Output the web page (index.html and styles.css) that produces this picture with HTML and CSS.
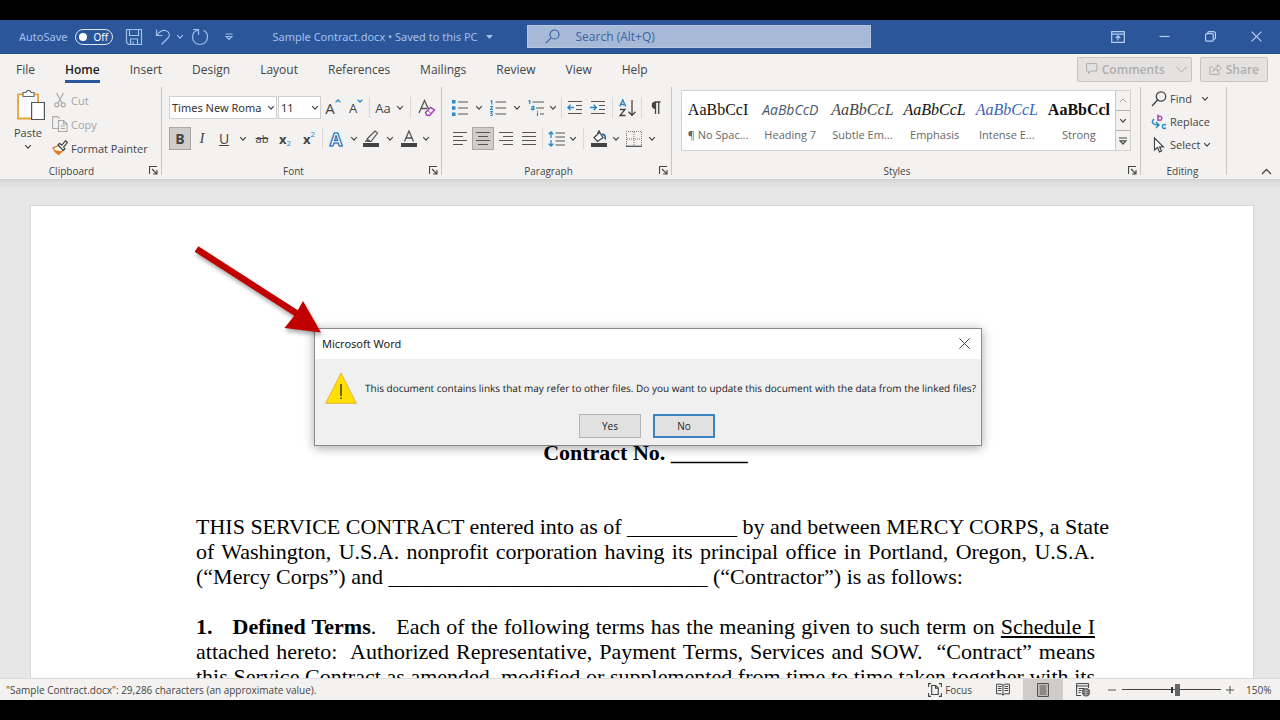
FILE: index.html
```html
<!DOCTYPE html>
<html lang="en">
<head>
<meta charset="utf-8">
<title>Sample Contract.docx</title>
<link rel="stylesheet" href="styles.css">
</head>
<body>
<svg class="defs" aria-hidden="true">
  <symbol id="chev" viewBox="0 0 8 6"><path d="M1.2 1.2 4 4.2 6.8 1.2" fill="none" stroke="currentColor" stroke-width="1.2"/></symbol>
  <symbol id="launch" viewBox="0 0 9 9"><path d="M.5 8V.5H8M3 3l4.500 4.500M8 4v4H4" fill="none" stroke="#444" stroke-width="1.100"/></symbol>
</svg>
<div class="app">
  <header class="titlebar">
    <label class="autosave">AutoSave
      <span class="toggle"><input type="checkbox" class="toggle-input"><span class="toggle-text">Off</span></span>
    </label>
    <div class="quick">
      <button class="tb" aria-label="Save"><svg width="18" height="18" viewBox="0 0 18 18"><path d="M1.500 1.500h15v15h-13l-2-2zM4.500 1.500v6h9v-6M5.500 16.500v-5.500h7v5.500M8 16v-2.500"/></svg></button>
      <button class="tb tb-undo" aria-label="Undo"><svg width="18" height="18" viewBox="0 0 18 18"><path d="M2.500 1.500v6h6M3 7C6 3 9 2 11.500 2.500c4 .8 5 5 2.500 7.500l-6.500 6.500"/></svg></button>
      <button class="tb tb-small" aria-label="Undo list"><svg width="8" height="6"><use href="#chev"/></svg></button>
      <button class="tb" aria-label="Repeat"><svg width="18" height="18" viewBox="0 0 18 18"><path d="M2 1.500h5.500v5.500M7 2C3.500 3 1.500 5.500 1.500 9a7.500 7.500 0 0 0 15 0c0-3-1.500-5.500-4-6.700"/></svg></button>
      <button class="tb" aria-label="Customize toolbar"><svg width="8" height="8" viewBox="0 0 8 8"><path d="M.5 1h7M1 3.500h6L4 6.500z"/></svg></button>
    </div>
    <button class="doc-name">Sample Contract.docx • Saved to this PC <svg width="7" height="4" viewBox="0 0 7 4"><path d="M0 0h7L3.500 4z" fill="currentColor"/></svg></button>
    <label class="search">
      <svg width="15" height="15" viewBox="0 0 15 15"><circle cx="9.500" cy="5.500" r="4.500"/><path d="M6.300 8.700.8 14.200"/></svg>
      <input class="search-input" type="text" placeholder="Search (Alt+Q)" aria-label="Search">
    </label>
    <div class="window-buttons">
      <button class="wb" aria-label="Ribbon options"><svg width="14" height="12" viewBox="0 0 14 12"><path d="M.7.7h12.600v10.600H.7zM.7 3.200h12.600M7 9.500V5M4.700 7 7 4.800 9.300 7"/></svg></button>
      <button class="wb" aria-label="Minimize"><svg width="11" height="11" viewBox="0 0 11 11"><path d="M.5 5.500h10"/></svg></button>
      <button class="wb" aria-label="Restore"><svg width="11" height="11" viewBox="0 0 11 11"><rect x=".6" y="2.600" width="7.600" height="7.600" rx="1"/><path d="M2.800 2.400V1.800Q2.800.6 4 .6h4.500q1.900 0 1.900 1.900V7q0 1.200-1.200 1.200h-.8"/></svg></button>
      <button class="wb" aria-label="Close window"><svg width="11" height="11" viewBox="0 0 11 11"><path d="m.6.6 9.800 9.800M10.400.6.6 10.400"/></svg></button>
    </div>
  </header>

  <nav class="tabs">
    <button class="tab">File</button>
    <button class="tab tab-active">Home</button>
    <button class="tab">Insert</button>
    <button class="tab">Design</button>
    <button class="tab">Layout</button>
    <button class="tab">References</button>
    <button class="tab">Mailings</button>
    <button class="tab">Review</button>
    <button class="tab">View</button>
    <button class="tab">Help</button>
    <div class="tab-actions">
      <button class="action comments" disabled><svg width="12" height="12" viewBox="0 0 12 12"><path d="M.6.6h10.300v7.400H5L2.500 10.500V8H.6z"/></svg>Comments<svg class="action-chev" width="11" height="7" viewBox="0 0 11 7"><path d="m.6 1 4.900 5 4.900-5"/></svg></button>
      <button class="action" disabled><svg width="13" height="12" viewBox="0 0 13 12"><path d="M4 4H1v7.400h9V8.500M4 8.500c.3-3 2-4.500 4.500-4.500V1.500l4 3.700-4 3.500V6.300C6.500 6.200 5 7 4 8.500z"/></svg>Share</button>
    </div>
  </nav>

  <section class="ribbon">
    <div class="group clipboard">
      <div class="clip-body">
        <button class="paste">
          <svg width="29" height="31" viewBox="0 0 29 31"><path d="M7 4.500H2v24h13M18 4.500h4V12" fill="#fff" stroke="#e8a33d" stroke-width="1.800"/><path d="M3 5.500h18V12h-6v15H3z" fill="#fafafa"/><path d="M7 6.500v-4h3C10.300-.2 14.700-.2 15 2.500h3v4z" fill="#fff" stroke="#666" stroke-width="1.100"/><path d="M15.600 12.500h12.800v17H15.600z" fill="#fff" stroke="#555" stroke-width="1.200"/></svg>
          <span>Paste</span>
          <svg width="8" height="6"><use href="#chev"/></svg>
        </button>
        <div class="clip-list">
          <button class="cmd" disabled><svg width="16" height="16" viewBox="0 0 16 16"><g fill="none" stroke="#aaa" stroke-width="1.200"><path d="M4.500 1 10 11M11.500 1 6 11"/><circle cx="4.800" cy="12.800" r="2"/><circle cx="11.200" cy="12.800" r="2"/></g></svg>Cut</button>
          <button class="cmd" disabled><svg width="16" height="16" viewBox="0 0 16 16"><g fill="none" stroke="#aaa" stroke-width="1.100"><path d="M6 12.500H.6V.6h5l2 2M6.500 4.500h5l3.500 3.500v7.500H6.500zM11.500 4.500V8H15M8.500 10h4.500M8.500 12.500h4.500"/></g></svg>Copy</button>
          <button class="cmd"><svg width="16" height="16" viewBox="0 0 16 16"><path d="M6.500 5.500 1 7.800c1 3 3 5 5.500 6.700l5-4.500z" fill="#fff" stroke="#e07b1a" stroke-width="1.300"/><path d="m2.500 10 4 4.500 3.500-3z" fill="#e07b1a"/><path d="m6 5 1.500-1.700 2.300 1.900L13.500.8 15.400 2.600 11.500 7l1.500 2-1.700 1.500z" fill="#fff" stroke="#444" stroke-width="1.200"/></svg>Format Painter</button>
        </div>
      </div>
      <div class="group-label">Clipboard<button class="launch" aria-label="Clipboard settings"><svg width="9" height="9"><use href="#launch"/></svg></button></div>
    </div>

    <div class="group font">
      <div class="rows">
        <div class="row">
          <span class="combo combo-font"><select class="combo-select" aria-label="Font"><option>Times New Roma</option></select><svg class="combo-chev" width="8" height="6"><use href="#chev"/></svg></span>
          <span class="combo combo-size"><select class="combo-select" aria-label="Font size"><option>11</option></select><svg class="combo-chev" width="8" height="6"><use href="#chev"/></svg></span>
          <button class="ib wide" aria-label="Grow font"><span class="ltr ltr-big">A</span><svg class="up" width="6" height="4" viewBox="0 0 6 4"><path d="m.6 3.400 2.400-2.400 2.400 2.400" fill="none" stroke="#2a86c8" stroke-width="1.300"/></svg></button>
          <button class="ib" aria-label="Shrink font"><span class="ltr">A</span><svg class="up" width="6" height="4" viewBox="0 0 6 4"><path d="m.6.6 2.400 2.400 2.400-2.400" fill="none" stroke="#2a86c8" stroke-width="1.300"/></svg></button>
          <i class="sep"></i>
          <button class="ib" aria-label="Change case"><span class="case">Aa</span></button>
          <button class="chev" aria-label="Change case list"><svg width="8" height="6"><use href="#chev"/></svg></button>
          <i class="sep sep-wide"></i>
          <button class="ib wide" aria-label="Clear formatting"><svg width="18" height="18" viewBox="0 0 18 18"><path d="M1 14 6.500 1.500 10.500 10M3 9.500h6" fill="none" stroke="#555" stroke-width="1.300"/><path d="m7.500 13.500 5-5 4 2.500-5 5.500-3-.500z" fill="#fff" stroke="#a43ab5" stroke-width="1.400"/><path d="m9.500 11.500 3.500 3" stroke="#a43ab5"/></svg></button>
        </div>
        <div class="row">
          <button class="ib pressed" aria-label="Bold"><b>B</b></button>
          <button class="ib serif" aria-label="Italic"><em>I</em></button>
          <button class="ib" aria-label="Underline"><u>U</u></button>
          <button class="chev chev-wide" aria-label="Underline list"><svg width="8" height="6"><use href="#chev"/></svg></button>
          <button class="ib small" aria-label="Strikethrough"><s>ab</s></button>
          <button class="ib wide" aria-label="Subscript"><b class="x">x</b><span class="low">2</span></button>
          <button class="ib wide" aria-label="Superscript"><b class="x">x</b><span class="high">2</span></button>
          <i class="sep sep-tight"></i>
          <button class="ib wide" aria-label="Text effects"><span class="fx">A</span></button>
          <button class="chev" aria-label="Text effects list"><svg width="8" height="6"><use href="#chev"/></svg></button>
          <button class="ib" aria-label="Highlight"><svg width="16" height="17" viewBox="0 0 16 17"><path d="M4 9 12 1l2.500 2L8 11.500H4.500zM4 9l3.500 2.500M2 11.500l2.500-1.500" fill="none" stroke="#555" stroke-width="1.200"/><path d="M0 13h16v4H0z" fill="#444"/></svg></button>
          <button class="chev chev-wide" aria-label="Highlight list"><svg width="8" height="6"><use href="#chev"/></svg></button>
          <button class="ib" aria-label="Font color"><svg width="16" height="17" viewBox="0 0 16 17"><path d="M3.500 11.500 8 1l4.500 10.500M5 8h6" fill="none" stroke="#555" stroke-width="1.300"/><path d="M0 13h16v4H0z" fill="#444"/></svg></button>
          <button class="chev" aria-label="Font color list"><svg width="8" height="6"><use href="#chev"/></svg></button>
        </div>
      </div>
      <div class="group-label">Font<button class="launch" aria-label="Font settings"><svg width="9" height="9"><use href="#launch"/></svg></button></div>
    </div>

    <div class="group paragraph">
      <div class="rows">
        <div class="row">
          <button class="ib" aria-label="Bullets"><svg width="16" height="16" viewBox="0 0 16 16"><path d="M0 0h3.500v3.500H0zM0 6.200h3.500v3.500H0zM0 12.400h3.500v3.500H0z" fill="#2a86c8"/><path d="M6 2h10M6 8h10M6 14h10" stroke="#555" stroke-width="1.200"/></svg></button>
          <button class="chev chev-wide" aria-label="Bullets list"><svg width="8" height="6"><use href="#chev"/></svg></button>
          <button class="ib" aria-label="Numbering"><svg width="16" height="16" viewBox="0 0 16 16"><path d="M.5 1.200 1.800.5v4M.3 6.600q2.500-1 2 .6L.5 9.500h2.500M.3 11.500h2L1 13.200q2.200.5 1 2-.8.500-1.700 0" fill="none" stroke="#2a86c8" stroke-width="1.100"/><path d="M5.500 2H16M5.500 8H16M5.500 14H16" stroke="#555" stroke-width="1.200"/></svg></button>
          <button class="chev chev-wide" aria-label="Numbering list"><svg width="8" height="6"><use href="#chev"/></svg></button>
          <button class="ib" aria-label="Multilevel list"><svg width="16" height="16" viewBox="0 0 16 16"><path d="M.5 1.200 1.800.5v3.500M3.500 6.700q2.500-1 2.500.8v2.500M6 8q-3-.2-2.500 1.300.8 1.200 2.500-.2M9.500 12.500V16M9.500 10.800v.9" fill="none" stroke="#2a86c8" stroke-width="1.200"/><path d="M4.500 2H16M8 8h8M12 14h4" stroke="#555" stroke-width="1.200"/></svg></button>
          <button class="chev" aria-label="Multilevel options"><svg width="8" height="6"><use href="#chev"/></svg></button>
          <i class="sep"></i>
          <button class="ib" aria-label="Decrease indent"><svg width="16" height="15" viewBox="0 0 16 15"><path d="M1 1.500h14M9 5.500h6M9 9.500h6M1 13.500h14" stroke="#555" stroke-width="1.200"/><path d="M7 7.500H1M3.500 4.800.9 7.500l2.600 2.700" fill="none" stroke="#2a86c8" stroke-width="1.400"/></svg></button>
          <button class="ib wide" aria-label="Increase indent"><svg width="16" height="15" viewBox="0 0 16 15"><path d="M1 1.500h14M9 5.500h6M9 9.500h6M1 13.500h14" stroke="#555" stroke-width="1.200"/><path d="M0 7.500h6M3.700 4.800l2.600 2.700-2.600 2.700" fill="none" stroke="#2a86c8" stroke-width="1.400"/></svg></button>
          <i class="sep"></i>
          <button class="ib wide" aria-label="Sort"><svg width="17" height="18" viewBox="0 0 17 18"><path d="M.7 7.500 3.700.8l3 6.700M1.700 5.500h4" fill="none" stroke="#2a86c8" stroke-width="1.400"/><path d="M1 10.500h5L1 16.500h5.500M13 1v15M9.500 12.800l3.500 3.500 3.500-3.500" fill="none" stroke="#444" stroke-width="1.300"/></svg></button>
          <i class="sep"></i>
          <button class="ib" aria-label="Show marks"><svg width="11" height="14" viewBox="0 0 11 14"><path d="M5 1h5.500M5.500 1v12M8.700 1v12" stroke="#444" stroke-width="1.300"/><path d="M5.500.5v7.500a3.750 3.750 0 0 1 0-7.500z" fill="#444"/></svg></button>
        </div>
        <div class="row">
          <button class="ib" aria-label="Align left"><svg width="16" height="15" viewBox="0 0 16 15"><path d="M1 1.500h14M1 5.500h10M1 9.500h14M1 13.500h10" stroke="#555" stroke-width="1.200"/></svg></button>
          <button class="ib pressed after" aria-label="Center"><svg width="16" height="15" viewBox="0 0 16 15"><path d="M1 1.500h14M3 5.500h10M1 9.500h14M3 13.500h10" stroke="#555" stroke-width="1.200"/></svg></button>
          <button class="ib wide" aria-label="Align right"><svg width="16" height="15" viewBox="0 0 16 15"><path d="M1 1.500h14M5 5.500h10M1 9.500h14M5 13.500h10" stroke="#555" stroke-width="1.200"/></svg></button>
          <button class="ib" aria-label="Justify"><svg width="16" height="15" viewBox="0 0 16 15"><path d="M1 1.500h14M1 5.500h14M1 9.500h14M1 13.500h14" stroke="#555" stroke-width="1.200"/></svg></button>
          <i class="sep"></i>
          <button class="ib" aria-label="Line spacing"><svg width="17" height="16" viewBox="0 0 17 16"><path d="M3 1v6M.7 3.300 3 1l2.300 2.300M3 9v6M.7 12.700 3 15l2.300-2.300" fill="none" stroke="#2a86c8" stroke-width="1.300"/><path d="M7.500 2H17M7.500 6H17M7.500 10H17M7.500 14H17" stroke="#555" stroke-width="1.200"/></svg></button>
          <button class="chev" aria-label="Line spacing list"><svg width="8" height="6"><use href="#chev"/></svg></button>
          <i class="sep sep-wide"></i>
          <button class="ib" aria-label="Shading"><svg width="16" height="17" viewBox="0 0 16 17"><path d="M3 7.500 8.500 2.500l3.500 5-5.500 4zM5.500 6 8 .8l1.500 3" fill="#fff" stroke="#444" stroke-width="1.200"/><path d="M10.500 4.500c3-.5 4 1 3.700 5" fill="none" stroke="#1b66ad" stroke-width="1.700"/><path d="M0 13h16v4H0z" fill="#444"/></svg></button>
          <button class="chev" aria-label="Shading list"><svg width="8" height="6"><use href="#chev"/></svg></button>
          <button class="ib wide" aria-label="Borders"><svg width="16" height="16" viewBox="0 0 16 16"><path d="M.5 15V.5h15V15M8 1v14M1 8h14" fill="none" stroke="#777" stroke-dasharray="1 1"/><path d="M0 15.300h16" stroke="#555" stroke-width="1.300"/></svg></button>
          <button class="chev" aria-label="Borders list"><svg width="8" height="6"><use href="#chev"/></svg></button>
        </div>
      </div>
      <div class="group-label">Paragraph<button class="launch" aria-label="Paragraph settings"><svg width="9" height="9"><use href="#launch"/></svg></button></div>
    </div>

    <div class="group styles">
      <div class="gallery">
        <button class="style"><span class="sample">AaBbCcI</span><span>¶ No Spac...</span></button>
        <button class="style"><span class="sample sample-heading">AaBbCcD</span><span>Heading 7</span></button>
        <button class="style"><span class="sample sample-subtle">AaBbCcL</span><span>Subtle Em...</span></button>
        <button class="style"><span class="sample sample-italic">AaBbCcL</span><span>Emphasis</span></button>
        <button class="style"><span class="sample sample-intense">AaBbCcL</span><span>Intense E...</span></button>
        <button class="style"><span class="sample sample-strong">AaBbCcl</span><span>Strong</span></button>
        <div class="scroller">
          <button class="scroll-btn scroll-off" aria-label="Previous styles"><svg width="8" height="5" viewBox="0 0 8 5"><path d="m1 4 3-3 3 3" fill="none" stroke="currentColor"/></svg></button>
          <button class="scroll-btn" aria-label="Next styles"><svg width="8" height="6"><use href="#chev"/></svg></button>
          <button class="scroll-btn" aria-label="More styles"><svg width="8" height="8" viewBox="0 0 8 8"><path d="M0 1h8M1 3.800h6L4 7z" fill="none" stroke="currentColor" stroke-width="1.200"/></svg></button>
        </div>
      </div>
      <div class="group-label">Styles<button class="launch" aria-label="Styles settings"><svg width="9" height="9"><use href="#launch"/></svg></button></div>
    </div>

    <div class="group editing">
      <div class="edit-list">
        <button class="cmd"><svg width="16" height="16" viewBox="0 0 16 16"><circle cx="10" cy="5.500" r="4.700" fill="none" stroke="#444" stroke-width="1.300"/><path d="M6.500 9 1 15" stroke="#444" stroke-width="1.400"/></svg>Find<svg class="find-chev" width="8" height="6"><use href="#chev"/></svg></button>
        <button class="cmd"><svg width="16" height="16" viewBox="0 0 16 16"><path d="M7 .500V7M7 5a2 2 0 1 1 .1.200" fill="none" stroke="#a43ab5" stroke-width="1.300"/><path d="M14.800 11q-3-1.500-3.500 1.500.5 3 3.500 1.500M3 5C0 7.500 1 11 7.500 11M5 8l3 3-3 3" fill="none" stroke="#2a86c8" stroke-width="1.400"/></svg>Replace</button>
        <button class="cmd"><svg width="16" height="16" viewBox="0 0 16 16"><path d="M3.500 1v12l3-2.500 2 4.500 2-1-2-4.200h3.800z" fill="#fff" stroke="#444" stroke-width="1.200"/></svg>Select<svg width="8" height="6"><use href="#chev"/></svg></button>
      </div>
      <div class="group-label">Editing</div>
    </div>
    <button class="collapse" aria-label="Collapse ribbon"><svg width="11" height="7" viewBox="0 0 11 7"><path d="m1 6 4.500-4.500L10 6" fill="none" stroke="#444" stroke-width="1.300"/></svg></button>
  </section>

  <main class="workspace">
    <article class="page">
      <h1 class="contract">Contract No. _______</h1>
      <p class="para"><span class="line line-full">THIS SERVICE CONTRACT entered into as of __________ by and between MERCY CORPS, a State</span> <span class="line line-full">of Washington, U.S.A. nonprofit corporation having its principal office in Portland, Oregon, U.S.A.</span> <span class="line">(“Mercy Corps”) and _____________________________ (“Contractor”) is as follows:</span></p>
      <p class="para"><span class="line line-full"><b class="number">1.</b><b>Defined Terms</b>.<span class="lead">Each</span> of the following terms has the meaning given to such term on <u>Schedule I</u></span> <span class="line line-full">attached hereto:&nbsp; Authorized Representative, Payment Terms, Services and SOW.&nbsp; “Contract” means</span> <span class="line line-full">this Service Contract as amended, modified or supplemented from time to time taken together with its</span></p>
    </article>

    <div class="dialog" role="dialog" aria-labelledby="dialog-title">
      <div class="dialog-head"><span id="dialog-title">Microsoft Word</span><button class="dialog-close" aria-label="Close"><svg width="11" height="11" viewBox="0 0 11 11"><path d="m.4.4 10.200 10.200M10.600.4.4 10.600" stroke="#444"/></svg></button></div>
      <div class="dialog-body">
        <div class="message"><svg width="32" height="32" viewBox="0 0 32 32"><path d="M16 1 31.300 31.300H.7z" fill="#ffe000" stroke="#e9b33a"/><path d="M16 12v12" stroke="#222" stroke-width="1.300"/><path d="M15.300 25.500h1.400v1.500h-1.400z" fill="#222"/></svg><p class="message-text">This document contains links that may refer to other files. Do you want to update this document with the data from the linked files?</p></div>
        <div class="choices"><button class="choice">Yes</button><button class="choice choice-default">No</button></div>
      </div>
    </div>

    <svg class="arrow" width="140" height="104" viewBox="0 0 140 104"><path d="M8.300 6.200 107.800 70.200 113 61l18 31.500L94.500 88l9.700-12.200L4.700 11.800z" fill="#c00000"/></svg>
  </main>

  <footer class="status">
    <span>"Sample Contract.docx": 29,286 characters (an approximate value).</span>
    <div class="views">
      <button class="sb focus"><svg width="14" height="14" viewBox="0 0 14 14"><path d="M.6 4V.6H3M11 .6h2.400V4M.6 10v3.400H3M11 13.400h2.400V10M3.700 2.500h4L10.300 5v6.500H3.700zM7.500 2.500V5.300h2.800" fill="none" stroke="#444" stroke-width="1.100"/></svg>Focus</button>
      <button class="sb" aria-label="Read mode"><svg width="14" height="13" viewBox="0 0 14 13"><path d="M.6 1.200h4.600L7 2.200l1.800-1h4.600v9.600H8.800L7 12.200l-1.800-1.400H.6zM7 2v10M2 3.500h3.500M2 5.500h3.500M2 7.500h3.500M8.500 3.500H12M8.500 5.500H12M8.500 7.500H12" fill="none" stroke="#444"/></svg></button>
      <button class="sb sb-active" aria-label="Print layout"><svg width="12" height="14" viewBox="0 0 12 14"><path d="M.6.6h10.800v12.800H.6zM2.500 3h7M2.500 5h7M2.500 7h7M2.500 9h7M2.500 11h7" fill="none" stroke="#444"/></svg></button>
      <button class="sb" aria-label="Web layout"><svg width="15" height="14" viewBox="0 0 15 14"><path d="M5 12.500H.6V.6h12V5M.6 3h12M2.500 5.500h6M2.500 7.500h3M2.500 9.500h2" fill="none" stroke="#444"/><circle cx="10" cy="9.300" r="4.200" fill="#555"/><path d="M6 9.300h8M10 5.200v8.200M7.500 7q2.500 1.500 5 0M7.500 11.700q2.500-1.500 5 0" fill="none" stroke="#ddd" stroke-width=".6"/></svg></button>
    </div>
    <div class="zoom">
      <button class="zb" aria-label="Zoom out"><svg width="8" height="8" viewBox="0 0 8 8"><path d="M0 4h8" stroke="#555"/></svg></button>
      <input class="slider" type="range" min="0" max="100" value="56" aria-label="Zoom">
      <button class="zb" aria-label="Zoom in"><svg width="8" height="8" viewBox="0 0 8 8"><path d="M0 4h8M4 0v8" stroke="#555"/></svg></button>
      <span class="percent">150%</span>
    </div>
  </footer>
</div>
</body>
</html>
```
FILE: styles.css
```css
* { box-sizing: border-box; }
body { margin: 0; background: #000; font: 11px "Open Sans", "Noto Sans", sans-serif; color: #444; }
button { font: inherit; color: inherit; background: none; border: 0; padding: 0; display: flex; align-items: center; justify-content: center; white-space: nowrap; }
svg { flex: none; }
.defs { position: absolute; width: 0; height: 0; }
.app { display: flex; flex-direction: column; height: 100vh; padding: 20px 0; }

.titlebar { display: flex; align-items: center; flex: none; height: 34px; background: #2b579a; color: #a3bfec; border-bottom: 1px solid #244c88; font-family: "Noto Sans", "Open Sans", sans-serif; }
.titlebar svg { fill: none; stroke: currentColor; stroke-width: 1.2; }
.autosave { display: flex; align-items: center; gap: 8px; padding-left: 19px; }
.toggle { display: flex; align-items: center; width: 38px; height: 16px; border: 1px solid #dce6f7; border-radius: 8px; padding-left: 3px; gap: 6px; color: #fff; }
.toggle-input { appearance: none; margin: 0; width: 8px; height: 8px; border-radius: 4px; background: #fff; }
.toggle-text { font-size: 10px; }
.quick { display: flex; align-items: center; margin-left: 8px; }
.tb { width: 26px; height: 26px; margin-right: 3px; }
.tb-small { width: 8px; }
.tb-undo { margin-right: 0; }
.doc-name { margin-left: 27px; gap: 8px; }
.doc-name svg { stroke: none; }
.search { display: flex; align-items: center; flex: 0 1 344px; gap: 16px; height: 23px; margin-left: 34px; padding-left: 17px; background: #a6bad7; color: #3c63a5; border: 1px solid #b5c6df; }
.search-input { flex: 1; min-width: 0; border: 0; padding: 0; background: none; font: 12px "Open Sans", "Noto Sans", sans-serif; color: inherit; }
.search-input::placeholder { color: #3c63a5; opacity: 1; }
.window-buttons { display: flex; margin-left: auto; padding-right: 1px; color: #b6ccf0; }
.wb { width: 46px; height: 30px; }

.tabs { display: flex; align-items: center; flex: none; height: 30px; padding: 0 12px 0 16px; gap: 30px; background: #f3f2f1; font-size: 12px; }
.tab { height: 30px; border-bottom: 3px solid transparent; border-top: 3px solid transparent; }
.tab-active { font-weight: 600; color: #222; height: 24px; border-top: 0; border-bottom-color: #2b579a; margin-top: 4px; }
.tab-actions { display: flex; gap: 8px; margin-left: auto; }
.action { height: 25px; padding: 0 8px; gap: 4px; border: 1px solid #c6c4c2; border-radius: 2px; background: #e3e2e0; color: #b0aeac; font-weight: 600; }
.action svg { fill: none; stroke: currentColor; }
.comments { padding-right: 4px; }
.action-chev { margin-left: 7px; }

.ribbon { display: flex; flex: none; height: 96px; padding: 3px 0 4px; background: #f3f2f1; border-bottom: 1px solid #d0cfce; }
.group { display: flex; flex-direction: column; justify-content: space-between; border-right: 1px solid #c8c6c4; }
.group-label { display: flex; align-items: center; justify-content: center; position: relative; height: 9px; font-size: 10px; }
.launch { position: absolute; right: 3px; bottom: 0; width: 9px; height: 9px; }
.clipboard { width: 162px; }
.clipboard .group-label { padding-right: 18px; }
.clip-body { display: flex; padding-left: 14px; gap: 10px; }
.paste { flex-direction: column; width: 28px; height: 65px; justify-content: flex-start; gap: 4px; padding-top: 3px; line-height: 15px; }
.paste svg:first-child { margin-left: 4px; }
.clip-list { display: flex; flex-direction: column; padding-top: 1px; }
.cmd { justify-content: flex-start; height: 24px; gap: 3px; }
.cmd:disabled { color: #a6a4a2; }
.rows { display: flex; flex-direction: column; gap: 8px; padding: 9px 0 0 7px; }
.row { display: flex; align-items: center; height: 23px; }
.font { width: 280px; }
.paragraph { width: 230px; }
.font .group-label, .paragraph .group-label { padding-right: 16px; }
.combo { display: flex; align-items: center; position: relative; height: 23px; background: #fff; border: 1px solid #d2d0ce; }
.combo-font { width: 108px; margin-right: 1px; }
.combo-size { width: 43px; }
.combo-select { appearance: none; width: 100%; border: 0; padding: 0 0 0 2px; background: none; font: 11px "Noto Sans", "Open Sans", sans-serif; color: #333; }
.combo-chev { position: absolute; right: 1px; }
.ib { width: 22px; height: 23px; font-size: 14px; }
.wide { width: 24px; }
.chev { width: 12px; height: 23px; }
.chev-wide { width: 16px; }
.sep { width: 1px; height: 21px; margin: 0 2px; background: #dad8d6; }
.sep-tight { margin: 0 1px; }
.sep-wide { margin: 0 4px; }
.pressed { background: #cfcdcb; border: 1px solid #aaa8a6; }
.after { margin-left: 1px; }
.ltr { font-size: 13px; }
.ltr-big { font-size: 15px; }
.up { align-self: flex-start; margin-top: 3px; }
.case { font-size: 13px; }
.serif { font-family: "Liberation Serif", serif; font-size: 15px; }
.small { font-size: 11px; }
.x { font-size: 13px; }
.fx { font-size: 18px; font-weight: bold; color: #fff; -webkit-text-stroke: 1px #1b66ad; text-shadow: 0 0 2px #4fa3e0, 0 0 1px #4fa3e0; }
.low, .high { color: #2a86c8; font-size: 8px; line-height: 8px; }
.low { align-self: flex-end; padding-bottom: 3px; }
.high { align-self: flex-start; padding-top: 3px; }

.styles { width: 469px; padding-left: 9px; }
.styles .group-label { padding-right: 27px; }
.gallery { display: flex; width: 450px; height: 61px; margin-top: 3px; background: #fff; border: 1px solid #d2d0ce; }
.style { flex: 1; min-width: 0; flex-direction: column; gap: 7px; font-size: 11px; line-height: 15px; color: #666; }
.sample { font: 16px "Liberation Serif", serif; line-height: 20px; color: #111; }
.sample-heading { font: italic 14px "Open Sans", "Noto Sans", sans-serif; line-height: 20px; color: #4a5a70; }
.sample-subtle { font-style: italic; color: #444; }
.sample-italic { font-style: italic; }
.sample-intense { font-style: italic; color: #4063bb; }
.sample-strong { font-weight: bold; }
.scroller { display: flex; flex-direction: column; width: 15px; border-left: 1px solid #c8c6c4; background: #f3f2f1; }
.scroll-btn { flex: 1; }
.scroll-btn + .scroll-btn { border-top: 1px solid #b4b2b0; }
.scroll-off { color: #aaa; }
.editing { width: 86px; padding-left: 10px; }
.editing .group-label { padding-right: 12px; }
.edit-list { display: flex; flex-direction: column; }
.edit-list .cmd { height: 23px; }
.find-chev { margin-left: 6px; }
.collapse { align-self: flex-end; margin: 0 8px 0 auto; width: 11px; height: 8px; }

.workspace { position: relative; flex: 1; min-height: 0; overflow: hidden; padding: 26px 27px 0 31px; background: linear-gradient(#d9d9d9, #e6e6e6 8px); }
.page { min-height: 100%; padding: 234px 158px 0 165px; background: #fff; color: #000; font: 22px "Liberation Serif", serif; line-height: 25px; outline: 1px solid #d8d8d8; }
.contract { margin: 0 0 49px; font-size: 22px; line-height: 25px; text-align: center; }
.para { margin: 0 0 25px; }
.line { display: block; white-space: nowrap; }
.line-full { text-align: justify; text-align-last: justify; }
.number { margin-right: 20px; }
.lead { margin-left: 20px; }

.dialog { position: absolute; left: 314px; top: 148px; width: 668px; border: 1px solid #8a8a8a; background: #f0f0f0; color: #222; box-shadow: 0 2px 10px rgba(0, 0, 0, .35); }
.dialog-head { display: flex; align-items: center; justify-content: space-between; height: 30px; padding: 0 10px 2px 7px; background: #fff; font-family: "Noto Sans", "Open Sans", sans-serif; }
.dialog-close { width: 13px; height: 20px; }
.dialog-body { padding: 13px 8px 7px 10px; }
.message { display: flex; align-items: center; gap: 8px; }
.message-text { margin: 0; font-size: 10px; white-space: nowrap; text-rendering: geometricPrecision; }
.choices { display: flex; gap: 12px; padding: 10px 0 0 254px; }
.choice { width: 62px; height: 24px; font-size: 10px; background: #e1e1e1; border: 1px solid #b4b4b4; }
.choice-default { border: 2px solid #3c83c4; }
.arrow { position: absolute; left: 190px; top: 60px; filter: drop-shadow(1px 3px 2px rgba(0, 0, 0, .35)); }

.status { display: flex; align-items: center; flex: none; height: 22px; padding: 0 6px; background: #f3f2f1; border-top: 1px solid #dcdad8; font-size: 10px; }
.views { display: flex; align-self: stretch; margin-left: auto; }
.sb { width: 40px; }
.sb-active { background: #cfcdcb; }
.focus { width: auto; gap: 3px; padding-right: 11px; }
.zoom { display: flex; align-items: center; margin-left: 5px; }
.zb { width: 8px; height: 20px; }
.slider { appearance: none; width: 99px; height: 12px; margin: 0 5px 0 6px; background: linear-gradient(#333, #333) 49px 3px / 2px 6px no-repeat, linear-gradient(#444, #444) 0 5px / 100% 1px no-repeat; }
.slider::-webkit-slider-thumb { appearance: none; width: 5px; height: 12px; background: #666; }
.percent { margin-left: 12px; width: 28px; }
```
